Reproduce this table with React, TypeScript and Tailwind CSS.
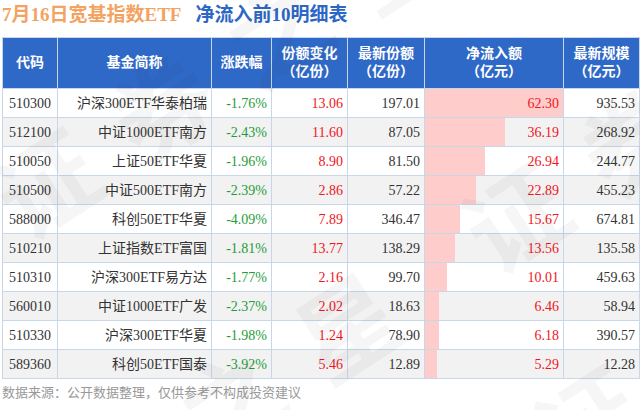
import React from 'react';

interface Row {
  code: string;
  name: string;
  change: string;
  shareChg: string;
  shares: string;
  inflow: number;
  scale: string;
}

const rows: Row[] = [
  { code: '510300', name: '沪深300ETF华泰柏瑞', change: '-1.76%', shareChg: '13.06', shares: '197.01', inflow: 62.3, scale: '935.53' },
  { code: '512100', name: '中证1000ETF南方', change: '-2.43%', shareChg: '11.60', shares: '87.05', inflow: 36.19, scale: '268.92' },
  { code: '510050', name: '上证50ETF华夏', change: '-1.96%', shareChg: '8.90', shares: '81.50', inflow: 26.94, scale: '244.77' },
  { code: '510500', name: '中证500ETF南方', change: '-2.39%', shareChg: '2.86', shares: '57.22', inflow: 22.89, scale: '455.23' },
  { code: '588000', name: '科创50ETF华夏', change: '-4.09%', shareChg: '7.89', shares: '346.47', inflow: 15.67, scale: '674.81' },
  { code: '510210', name: '上证指数ETF富国', change: '-1.81%', shareChg: '13.77', shares: '138.29', inflow: 13.56, scale: '135.58' },
  { code: '510310', name: '沪深300ETF易方达', change: '-1.77%', shareChg: '2.16', shares: '99.70', inflow: 10.01, scale: '459.63' },
  { code: '560010', name: '中证1000ETF广发', change: '-2.37%', shareChg: '2.02', shares: '18.63', inflow: 6.46, scale: '58.94' },
  { code: '510330', name: '沪深300ETF华夏', change: '-1.98%', shareChg: '1.24', shares: '78.90', inflow: 6.18, scale: '390.57' },
  { code: '589360', name: '科创50ETF国泰', change: '-3.92%', shareChg: '5.46', shares: '12.89', inflow: 5.29, scale: '12.28' },
];

const maxInflow = 62.3;

const Header = ({ top, bottom }: { top: string; bottom?: string }) => (
  <th className="border border-[#c8d7e8] bg-[#2f69c7] p-0 text-center align-middle text-[14px] font-bold leading-[18px] text-white">
    <div>{top}</div>
    {bottom && <div>{bottom}</div>}
  </th>
);

// one strip of the tiled "证券之星" watermark
const MarkLine = ({ className }: { className: string }) => (
  <div className={`absolute flex whitespace-nowrap text-[100px] font-bold leading-[100px] tracking-[38px] text-black/[0.035] ${className}`}>
    {[0, 1, 2, 3].map((n) => (
      <span key={n} className="inline-block w-[615px]">证券之星</span>
    ))}
  </div>
);

export default function App() {
  return (
    <div
      className="relative h-[410px] w-[640px] overflow-hidden bg-white"
      style={{ fontFamily: '"Liberation Serif", "Noto Sans CJK SC", serif' }}
    >
      {/* Title */}
      <div className="flex h-[37px] items-start pl-[2px] pt-[2px] text-[19px] font-bold leading-[26px]">
        <span className="text-[#f4a261]">7月16日宽基指数ETF</span>
        <span className="ml-[14px] text-[#2d67c6]">净流入前10明细表</span>
      </div>

      {/* Table */}
      <table className="ml-[2px] w-[637px] table-fixed border-collapse text-[14px] text-[#333]">
        <colgroup>
          <col className="w-[55px]" />
          <col className="w-[154px]" />
          <col className="w-[60px]" />
          <col className="w-[76px]" />
          <col className="w-[77px]" />
          <col className="w-[139px]" />
          <col className="w-[76px]" />
        </colgroup>
        <thead>
          <tr className="h-[51px]">
            <Header top="代码" />
            <Header top="基金简称" />
            <Header top="涨跌幅" />
            <Header top="份额变化" bottom="（亿份）" />
            <Header top="最新份额" bottom="（亿份）" />
            <Header top="净流入额" bottom="（亿元）" />
            <Header top="最新规模" bottom="（亿元）" />
          </tr>
        </thead>
        <tbody>
          {rows.map((r, i) => (
            <tr key={r.code} className={`h-[29px] ${i % 2 === 1 ? 'bg-[#f2f2f2]' : 'bg-white'}`}>
              <td className="border border-[#c8d7e8] p-0 text-center">{r.code}</td>
              <td className="border border-[#c8d7e8] p-0 pr-1 text-right">{r.name}</td>
              <td className="border border-[#c8d7e8] p-0 pr-1 text-right text-[#1f9d3a]">{r.change}</td>
              <td className="border border-[#c8d7e8] p-0 pr-1 text-right text-[#f0161c]">{r.shareChg}</td>
              <td className="border border-[#c8d7e8] p-0 pr-1 text-right">{r.shares}</td>
              <td className="relative border border-[#c8d7e8] p-0 pr-1 text-right text-[#f0161c]">
                <div
                  className="absolute left-0 top-0 h-full bg-[#ffcccc]"
                  style={{ width: `${(r.inflow / maxInflow) * 100}%` }}
                />
                <span className="relative">{r.inflow.toFixed(2)}</span>
              </td>
              <td className="border border-[#c8d7e8] p-0 pr-1 text-right">{r.scale}</td>
            </tr>
          ))}
        </tbody>
      </table>

      {/* Footer */}
      <div
        className="pl-[2px] pt-[3px] text-[13px] leading-[20px] text-[#999]"
        style={{ fontFamily: '"Noto Sans CJK SC", sans-serif' }}
      >
        数据来源：公开数据整理，仅供参考不构成投资建议
      </div>

      {/* Watermark */}
      <div
        className="pointer-events-none absolute left-[320px] top-[205px] h-0 w-0 -rotate-[33deg]"
        style={{ fontFamily: '"Noto Sans CJK SC", sans-serif' }}
      >
        <MarkLine className="left-[-882px] top-[-221px]" />
        <MarkLine className="left-[-1122px] top-[63px]" />
        <MarkLine className="left-[-1172px] top-[273px]" />
      </div>
    </div>
  );
}
